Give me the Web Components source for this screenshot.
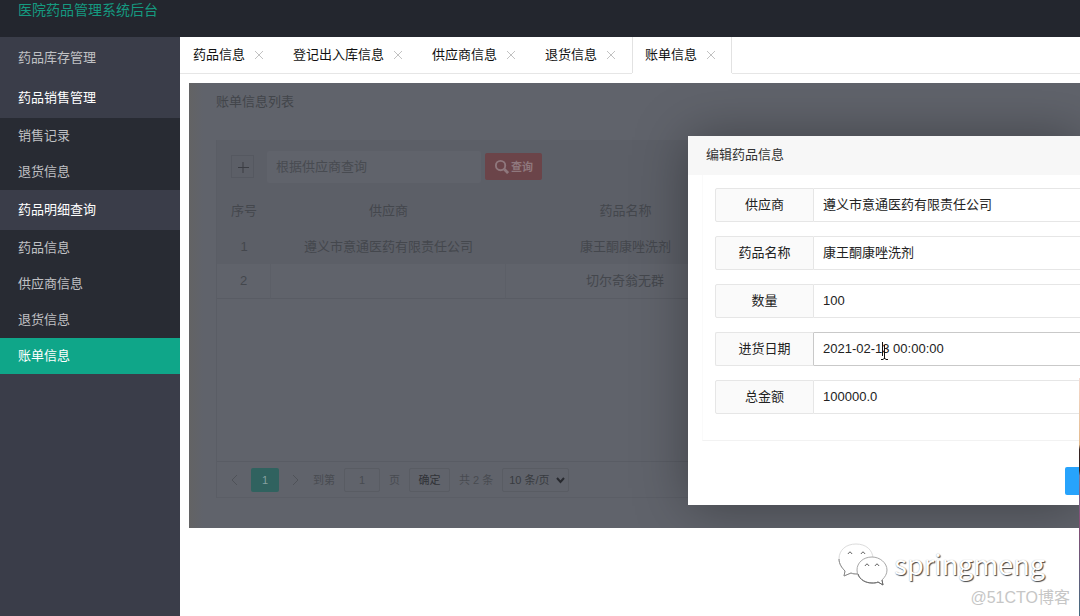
<!DOCTYPE html>
<html lang="zh-CN">
<head>
<meta charset="utf-8">
<title>医院药品管理系统后台</title>
<style>
  html, body { margin: 0; height: 100%; }
  body { font: 13px/20px "Liberation Sans", "Noto Sans CJK SC", sans-serif; color: #222; background: #fff; overflow: hidden; }
</style>
</head>
<body>
<admin-app></admin-app>
<script>
const make = (name, html, setup) => {
  const t = document.createElement('template');
  t.innerHTML = '<style>*{box-sizing:border-box}button,input,select{font:inherit;color:inherit;margin:0}</style>' + html;
  customElements.define(name, class extends HTMLElement {
    constructor() {
      super();
      this.attachShadow({ mode: 'open' }).append(t.content.cloneNode(true));
    }
    connectedCallback() { if (setup) setup(this, this.shadowRoot); }
  });
};

make('nav-item', `<style>
  :host { display: block; }
  a { display: flex; align-items: center; height: 36px; padding: 0 18px; color: #c0c1c4; text-decoration: none; }
  :host([group]) a { height: 40px; }
  :host([open]) a { color: #fff; }
  :host([active]) a { background: #0fa689; color: #fff; }
</style><a href="#"><slot></slot></a>`);

make('side-nav', `<style>
  :host { display: block; flex: none; width: 180px; background: #3a3d49; padding-top: 1px; }
  .sub { background: #282b33; }
</style>
<nav>
  <nav-item group>药品库存管理</nav-item>
  <nav-item group open>药品销售管理</nav-item>
  <div class="sub"><nav-item>销售记录</nav-item><nav-item>退货信息</nav-item></div>
  <nav-item group open>药品明细查询</nav-item>
  <div class="sub"><nav-item>药品信息</nav-item><nav-item>供应商信息</nav-item><nav-item>退货信息</nav-item><nav-item active>账单信息</nav-item></div>
</nav>`);

make('page-tab', `<style>
  :host { display: flex; align-items: center; gap: 8px; padding: 0 15px 0 13px; height: 37px; border-bottom: 1px solid #e6e6e6; color: #111; }
  :host([active]) { border-bottom-color: #fff; box-shadow: inset 1px 0 #e2e2e2, inset -1px 0 #e2e2e2; }
  button { display: flex; width: 12px; height: 12px; padding: 0; border: 0; background: none; }
  svg { width: 12px; height: 12px; stroke: #c2c2c2; fill: none; }
</style><span><slot></slot></span><button aria-label="关闭"><svg viewBox="0 0 12 12"><path d="M2 2l8 8M10 2l-8 8"/></svg></button>`);

make('tab-bar', `<style>
  :host { display: flex; }
  .rest { flex: 1; border-bottom: 1px solid #e6e6e6; }
</style>
<page-tab>药品信息</page-tab><page-tab>登记出入库信息</page-tab><page-tab>供应商信息</page-tab><page-tab>退货信息</page-tab><page-tab active>账单信息</page-tab><div class="rest"></div>`);

make('search-bar', `<style>
  :host { display: flex; align-items: center; height: 53px; padding: 0 14px; background: #5c5f67; }
  button { display: flex; align-items: center; justify-content: center; padding: 0; }
  .add { width: 23px; height: 23px; border: 1px solid #555860; background: none; margin-right: 13px; }
  .add svg { width: 12px; height: 12px; stroke: #3a3c42; }
  input { width: 214px; height: 32px; border: 0; background: #60636b; padding: 0 9px; margin-right: 4px; outline: 0; border-radius: 2px; }
  input::placeholder { color: #484b51; opacity: 1; }
  .find { gap: 2px; width: 57px; height: 27px; border: 0; border-radius: 2px; background: #6b4449; color: #8f787d; font-size: 11px; font-weight: bold; }
  .find svg { width: 15px; height: 15px; fill: none; stroke: #8f787d; stroke-width: 2; }
</style>
<button class="add" aria-label="添加"><svg viewBox="0 0 12 12"><path d="M6 1v11M1 6.500h11"/></svg></button>
<input type="text" placeholder="根据供应商查询" aria-label="根据供应商查询">
<button class="find"><svg viewBox="0 0 16 16"><circle cx="7" cy="7" r="5"/><path d="M11 11l4 4" stroke-width="3"/></svg><span>查询</span></button>`);

make('bill-table', `<style>
  :host { display: block; height: 268px; }
  table { width: 100%; table-layout: fixed; border-collapse: separate; border-spacing: 0; color: #44474d; }
  th, td { font-weight: normal; text-align: center; padding: 0; height: 35px; }
  thead th { height: 36px; }
  thead, .hover { background: #5c5f67; }
  tbody tr:last-child td { border-bottom: 1px solid #595c64; border-right: 1px solid #5c5f67; }
  .n { width: 54px; } .s { width: 235px; } .m { width: 239px; }
</style>
<table>
  <thead><tr><th class="n">序号</th><th class="s">供应商</th><th class="m">药品名称</th><th></th></tr></thead>
  <tbody>
    <tr class="hover"><td>1</td><td>遵义市意通医药有限责任公司</td><td>康王酮康唑洗剂</td><td></td></tr>
    <tr><td>2</td><td></td><td>切尔奇翁无群</td><td></td></tr>
  </tbody>
</table>`);

make('page-nav', `<style>
  :host { display: flex; align-items: center; height: 37px; padding-left: 8px; border-top: 1px solid #595c64; border-bottom: 1px solid #5b5e66; font-size: 11px; color: #484b51; }
  button, input, select { height: 24px; border: 1px solid #595c63; background: none; border-radius: 2px; padding: 0; }
  .arrow { display: flex; align-items: center; justify-content: center; width: 20px; border: 0; }
  .arrow svg { width: 8px; height: 12px; fill: none; stroke: #4f5258; }
  .cur { width: 28px; border: 0; margin: 0 6px; background: #30625f; color: #86a09f; }
  .to { margin: 0 9px 0 8px; }
  input { width: 36px; text-align: center; outline: 0; margin-right: 9px; }
  .ok { width: 41px; margin: 0 9px; color: #303237; }
  .size { position: relative; margin-left: 9px; }
  select { appearance: none; width: 67px; padding: 0 6px; color: #383b40; display: block; }
  .size svg { position: absolute; right: 4px; top: 8px; width: 9px; height: 8px; fill: none; stroke: #282a2f; stroke-width: 2; pointer-events: none; }
</style>
<button class="arrow" aria-label="上一页"><svg viewBox="0 0 8 12"><path d="M6 1L1 6l5 5"/></svg></button>
<button class="cur">1</button>
<button class="arrow" aria-label="下一页"><svg viewBox="0 0 8 12"><path d="M2 1l5 5-5 5"/></svg></button>
<label class="to" for="p">到第</label><input id="p" type="text" value="1"><span>页</span>
<button class="ok">确定</button><span>共 2 条</span>
<div class="size"><select aria-label="每页条数"><option>10 条/页</option></select><svg viewBox="0 0 9 8"><path d="M1 2l3.500 4L8 2"/></svg></div>`);

make('form-row', `<style>
  :host { display: flex; height: 34px; }
  label { display: flex; align-items: center; justify-content: center; flex: none; width: 99px; background: #fafafa; border: 1px solid #e6e6e6; border-radius: 2px 0 0 2px; color: #222; }
  .box { position: relative; flex: 1; display: flex; }
  input { width: 100%; border: 1px solid #e6e6e6; border-width: 1px 0; padding: 0 9px; background: #fff; color: #222; outline: 0; border-radius: 0; }
  :host([focused]) input { border-color: #c9c9c9; }
  :host([focused]) label { border-right-color: #c9c9c9; }
</style><label for="f"></label><div class="box"><input id="f" type="text"><slot></slot></div>`,
(el, root) => {
  root.querySelector('label').textContent = el.getAttribute('label');
  root.querySelector('input').value = el.getAttribute('value');
});

make('edit-dialog', `<style>
  :host { display: block; background: #fff; box-shadow: 1px 1px 50px rgba(0,0,0,.35); overflow: hidden; }
  h2 { margin: 0; height: 39px; padding: 0 18px; font-size: 13px; line-height: 38px; font-weight: normal; color: #333; background: #f7f7f7; }
  form { display: grid; gap: 14px; margin-left: 14px; padding: 13px 0 26px 12px; border-bottom: 1px solid #f2f2f2; border-left: 1px solid #fafafa; }
  footer { display: flex; justify-content: flex-end; padding: 26px 0 10px; overflow: hidden; }
  button { width: 57px; height: 28px; margin-right: -42px; border: 0; border-radius: 2px; background: #27a3fc; }
  .beam { position: absolute; left: 64px; top: 10px; width: 11px; height: 18px; fill: none; stroke: #111; }
</style>
<h2>编辑药品信息</h2>
<form>
  <form-row label="供应商" value="遵义市意通医药有限责任公司"></form-row>
  <form-row label="药品名称" value="康王酮康唑洗剂"></form-row>
  <form-row label="数量" value="100"></form-row>
  <form-row focused label="进货日期" value="2021-02-13 00:00:00"><svg class="beam" viewBox="0 0 11 18"><path d="M4.500 0v14M6.500 3v13M3 17.500h2.500M7.500 17.500h2.500M5.500 16.500h2"/></svg></form-row>
  <form-row label="总金额" value="100000.0"></form-row>
</form>
<footer><button type="button" aria-label="保存"></button></footer>`);

make('bill-panel', `<style>
  :host { display: block; position: relative; overflow: hidden; margin: 9px 0 0 9px; padding: 0 0 30px 27px; background: linear-gradient(90deg, #636364, #60636b 14px); }
  h1 { margin: 0; height: 57px; font-size: 13px; line-height: 37px; font-weight: normal; color: #42454a; }
  .grid { border-left: 1px solid #5a5d65; }
  edit-dialog { position: absolute; left: 499px; right: 0; top: 53px; }
</style>
<h1>账单信息列表</h1>
<div class="grid"><search-bar></search-bar><bill-table></bill-table><page-nav></page-nav></div>
<edit-dialog></edit-dialog>`);

make('water-mark', `<style>
  :host { display: flex; flex-direction: column; align-items: flex-end; padding: 14px 10px 0 0; }
  .brand { display: flex; align-items: center; gap: 6px; margin-right: 25px; font: 27px/44px "Noto Sans CJK SC", sans-serif; color: #fff; text-shadow: 1px 1px 1px #444, 0 0 1px #aaa; }
  svg { width: 50px; height: 44px; fill: #fff; }
  .site { font-size: 16px; line-height: 24px; color: #c6c6c6; }
</style>
<div class="brand"><svg viewBox="0 0 50 44"><path d="M18 2C8 2 1 8 1 17c0 5 3 9 6 12l-1 5 7-3c3 1 7 1 10 0 7-1 12-7 12-14C35 8 28 2 18 2z" stroke="#dcdcdc"/><path d="M1 17c0 5 3 9 6 12l-1 5 7-3c2 1 4 1 6 1" stroke="#888" fill="none"/><path d="M34 15c-9 0-15 6-15 13 0 8 7 13 15 13 2 0 4 0 6-1l5 3-1-5c3-3 5-6 5-10 0-7-7-13-15-13z" stroke="#a8a8a8"/><path d="M20 32c2 6 8 9 14 9 2 0 4 0 6-1l5 3-1-5" fill="none" stroke="#666"/><path d="M10 12q2-4 4 0M23 12q2-4 4 0M27 24q2-4 4 0M37 24q2-4 4 0" fill="none" stroke="#666"/></svg><span>springmeng</span></div>
<div class="site">@51CTO博客</div>`);

make('admin-app', `<style>
  :host { display: flex; flex-direction: column; min-height: 100vh; position: relative; }
  header { height: 37px; padding: 0 18px; background: #23262e; color: #159a80; font-size: 14px; line-height: 20px; }
  .body { display: flex; flex: 1; }
  main { flex: 1; min-width: 0; }
  .edge { position: absolute; right: 0; top: 378px; bottom: 0; width: 1px; background: linear-gradient(#f6d9cf, #e3b98b 28%, #3a2422 30%, #33201f 39%, #77769e 41%, #8a4a74 60%, #446b80); }
</style>
<header>医院药品管理系统后台</header>
<div class="body"><side-nav></side-nav><main><tab-bar></tab-bar><bill-panel></bill-panel><water-mark></water-mark></main></div>
<div class="edge"></div>`);
</script>
</body>
</html>
